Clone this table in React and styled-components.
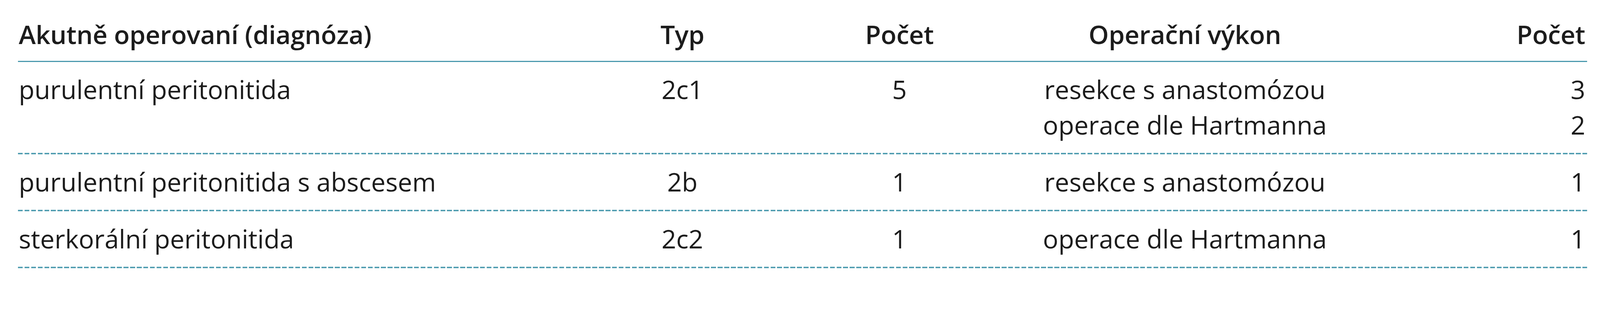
import styled, { createGlobalStyle } from 'styled-components';

// measured sizes from the reference, scaled to how the page is photographed
const K = 0.889;
const px = (v) => `${Math.round(v * K * 10) / 10}px`;

const TEAL = '#4b9aae';

const GlobalStyle = createGlobalStyle`
	html,
	body {
		margin: 0;
		padding: 0;
		background: #fff;
	}
	body {
		font-family: 'Open Sans', 'Noto Sans', 'Liberation Sans', sans-serif;
		color: #1c1c1c;
	}
`;

export const TableWrap = styled.div`
	width: ${px(4518)};
	margin-left: ${px(52)};
	display: flex;
	flex-direction: column;
`;

export const Row = styled.div`
	display: grid;
	grid-template-columns: ${px(1648)} ${px(530)} ${px(720)} ${px(924)} 1fr;
	align-items: start;
	padding: ${({ head }) => (head ? `${px(48)} 0 ${px(26)}` : `${px(28)} 0 ${px(34)}`)};
	border-bottom: ${({ head }) => (head ? `${px(4)} solid ${TEAL}` : 'none')};
	background-image: ${({ head }) =>
		head
			? 'none'
			: `repeating-linear-gradient(to right, ${TEAL} 0 ${px(14)}, transparent ${px(14)} ${px(19)})`};
	background-size: 100% ${px(4)};
	background-position: left bottom;
	background-repeat: no-repeat;
`;

export const Cell = styled.div`
	font-size: ${px(74)};
	line-height: ${px(102)};
	font-weight: ${({ head }) => (head ? 600 : 400)};
	text-align: ${({ align }) => align || 'left'};
	padding-left: ${({ align }) => (!align ? px(2) : '0')};
	padding-right: ${({ align }) => (align === 'right' ? px(5) : '0')};
	white-space: nowrap;
	letter-spacing: ${({ head }) => (head ? '-0.3px' : '0')};
`;

const rows = [
	{
		diag: 'purulentní peritonitida',
		typ: '2c1',
		count: '5',
		ops: ['resekce s anastomózou', 'operace dle Hartmanna'],
		opCounts: ['3', '2'],
	},
	{
		diag: 'purulentní peritonitida s abscesem',
		typ: '2b',
		count: '1',
		ops: ['resekce s anastomózou'],
		opCounts: ['1'],
	},
	{
		diag: 'sterkorální peritonitida',
		typ: '2c2',
		count: '1',
		ops: ['operace dle Hartmanna'],
		opCounts: ['1'],
	},
];

function Lines({ items }) {
	return items.map((t, i) => <div key={i}>{t}</div>);
}

export default function App() {
	return (
		<>
			<GlobalStyle />
			<TableWrap>
				<Row head>
					<Cell head>Akutně operovaní (diagnóza)</Cell>
					<Cell head align="center">
						Typ
					</Cell>
					<Cell head align="center">
						Počet
					</Cell>
					<Cell head align="center">
						Operační výkon
					</Cell>
					<Cell head align="right">
						Počet
					</Cell>
				</Row>
				{rows.map((r) => (
					<Row key={r.diag}>
						<Cell>{r.diag}</Cell>
						<Cell align="center">{r.typ}</Cell>
						<Cell align="center">{r.count}</Cell>
						<Cell align="center">
							<Lines items={r.ops} />
						</Cell>
						<Cell align="right">
							<Lines items={r.opCounts} />
						</Cell>
					</Row>
				))}
			</TableWrap>
		</>
	);
}
